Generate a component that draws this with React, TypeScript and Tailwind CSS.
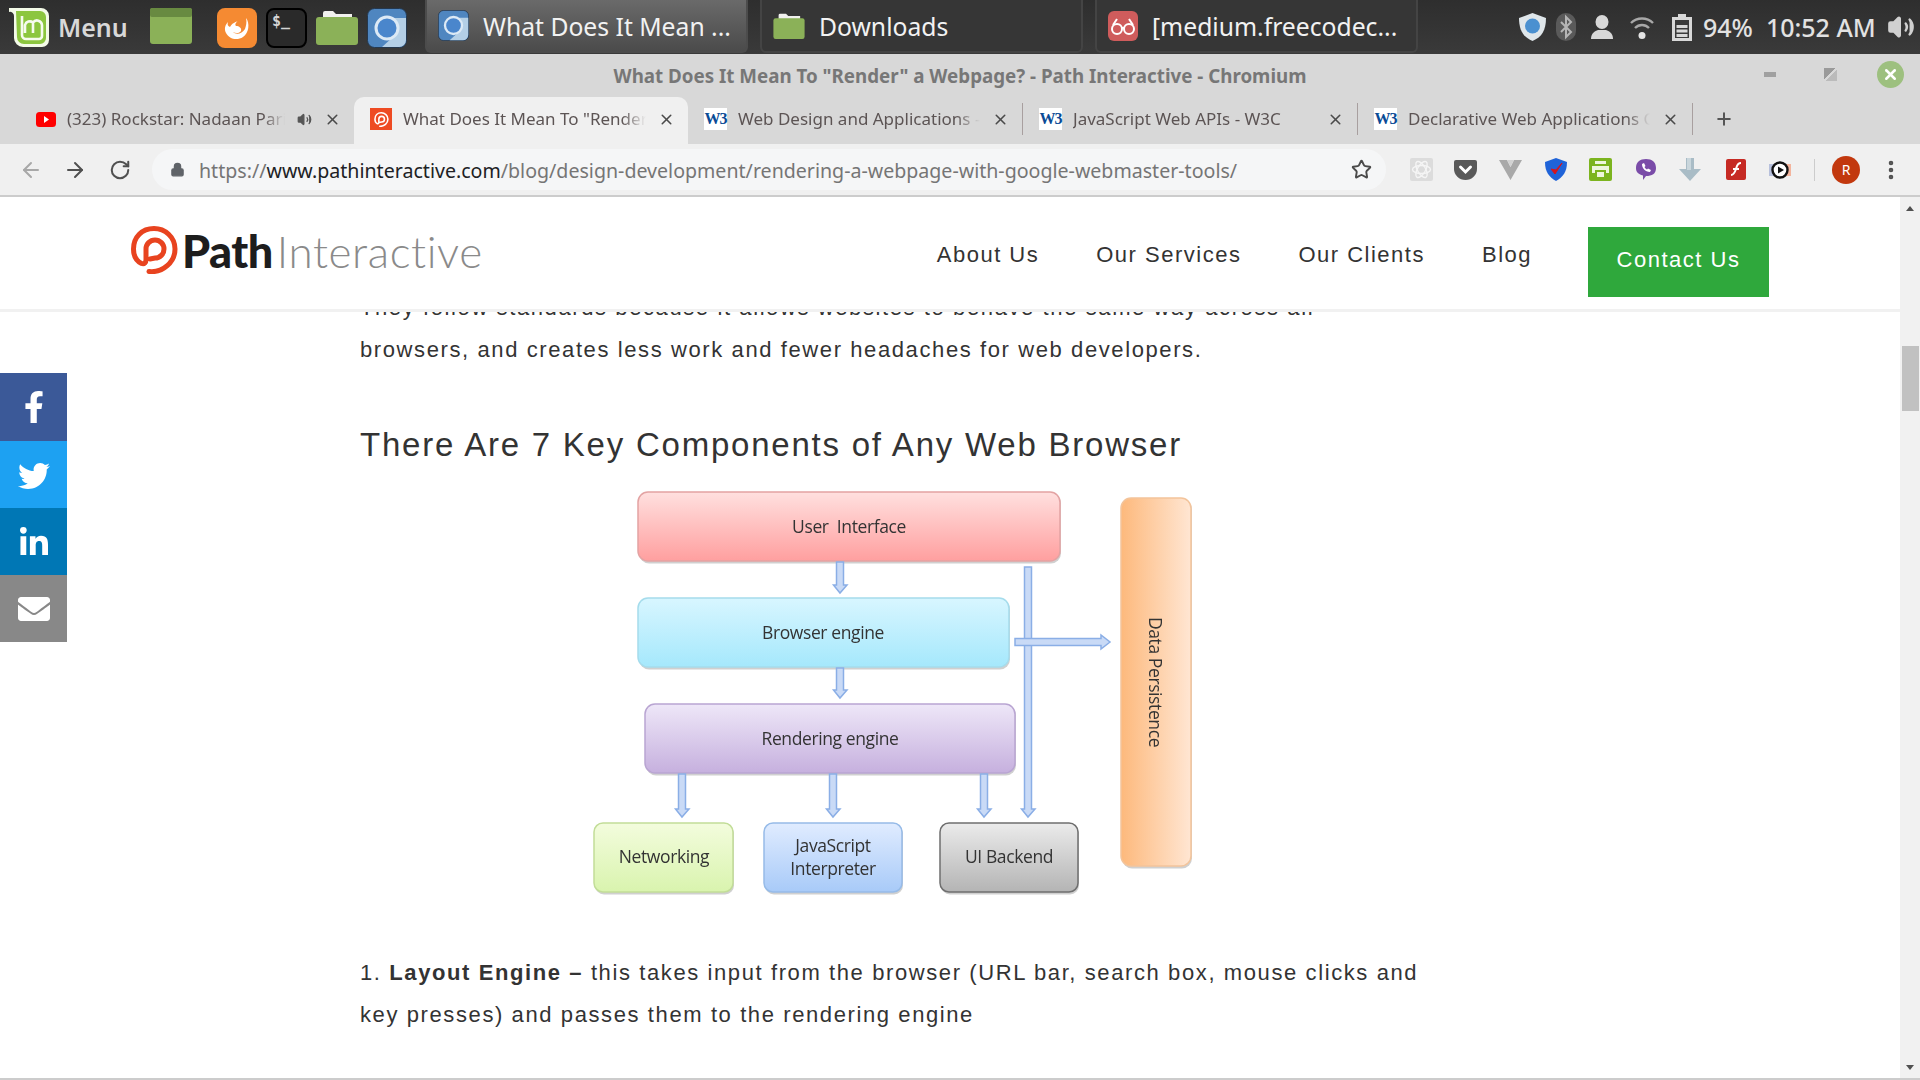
import { ArrowLeft, ArrowRight, EllipsisVertical, Lock, Plus, RotateCw, Star, Volume2, X } from 'lucide-react';
import type { ReactNode } from 'react';
import { FaEnvelope, FaFacebookF, FaLinkedinIn, FaTwitter } from 'react-icons/fa';

function PathMark({ color, className }: { color: string; className: string }) {
  return (
    <svg viewBox="0 0 47 48" className={className} fill="none" stroke={color} strokeWidth="5" strokeLinecap="round">
      <path d="M18 45.5C32 47 44 36 44 23 44 11 34 2.5 23 2.5 11 2.5 2.5 11 2.5 23c0 7 3 12 8 14.5 3 1 4.5-1 4.5-4V23c0-5 4-9 9-9s9 4 9 9-4 9-9 9l-5 1" />
    </svg>
  );
}

function ChromiumIcon({ className }: { className: string }) {
  return (
    <svg viewBox="0 0 40 40" className={className}>
      <rect x="0.5" y="0.5" width="39" height="39" rx="7" fill="#4f86c0" stroke="#24384f" />
      <path d="M20 10h19v22a7 7 0 0 1-7 7H15l11-10z" fill="#b4cfe6" />
      <circle cx="20" cy="20" r="11" fill="#4a86cc" stroke="#dce9f5" strokeWidth="3" />
    </svg>
  );
}

function FolderIcon({ className }: { className: string }) {
  return (
    <svg viewBox="0 0 42 35" className={className}>
      <path d="M7 7V3a2 2 0 0 1 2-2h8l3 3h16v4H7z" fill="#f1f1ee" />
      <rect x="0" y="7" width="42" height="28" rx="3" fill="#8bb158" />
    </svg>
  );
}

function TaskButton({ icon, title, active, width }: { icon: ReactNode; title: string; active?: boolean; width: string }) {
  return (
    <div
      className={`flex h-[53px] items-center rounded-b-[6px] border-x-2 border-b-2 ${width} ${
        active
          ? 'border-[#4c4c4c] bg-gradient-to-b from-[#6a6a6a] to-[#4b4b4b] pl-[11px]'
          : 'border-[#444444] bg-[#363636] pl-[11px]'
      }`}
    >
      {icon}
      <span className="ml-[14px] whitespace-nowrap pt-[3px] text-[24.7px] leading-none text-[#f2f2f2]">{title}</span>
    </div>
  );
}

function TopPanel() {
  return (
    <div className="flex h-[54px] shrink-0 items-start bg-gradient-to-b from-[#2e2e2e] to-[#3a3a3a] [font-family:'Noto_Sans',sans-serif]">
      <svg viewBox="0 0 42 41" className="ml-[8px] mt-[7px] h-[41px] w-[42px] shrink-0">
        <path d="M1 1h32a8 8 0 0 1 8 8v24a7 7 0 0 1-7 7H15A9 9 0 0 1 6 31V9a4 4 0 0 0-5-4z" fill="#f4fbe8" />
        <path d="M8 4h24a6 6 0 0 1 6 6v21a6 6 0 0 1-6 6H16a7 7 0 0 1-7-7z" fill="#8cc63f" />
        <path d="M14 9v19a4 4 0 0 0 4 4h13a3 3 0 0 0 3-3V18a5 5 0 0 0-9-2.5A5 5 0 0 0 17 18v8M25 16v10" fill="none" stroke="#f6fbef" strokeWidth="2.6" />
      </svg>
      <span className="ml-[8px] mt-[9px] w-[69px] text-[25px] font-semibold leading-[36px] text-[#d8d8d8]">Menu</span>
      <svg viewBox="0 0 42 36" className="ml-[23px] mt-[8px] h-[36px] w-[42px] shrink-0">
        <rect width="42" height="36" rx="3" fill="#8bb158" />
        <rect width="42" height="9" rx="2" fill="#688a41" />
      </svg>
      <svg viewBox="0 0 40 40" className="ml-[25px] mt-[8px] h-[40px] w-[40px] shrink-0">
        <rect width="40" height="40" rx="8" fill="#f58a32" />
        <path d="M29 10c4 5 3 15-3 19-6 4-14 2-17-4-2-4-1-8 2-11-1 3 0 4 2 5 2-4 6-5 8-6-3 2-3 4-2 5 3 0 6 2 5 5-1 2-5 3-8 1 3 3 9 2 12-3 1-3 2-7 1-11z" fill="#fff" />
      </svg>
      <div className="ml-[9px] mt-[8px] h-[40px] w-[41px] shrink-0 rounded-[8px] border-2 border-black bg-[#2a2a2a] pl-[4px] text-[15px] font-bold leading-[22px] text-[#d5d5d5] [font-family:'DejaVu_Sans_Mono',monospace]">
        $_
      </div>
      <FolderIcon className="ml-[9px] mt-[10px] h-[35px] w-[42px] shrink-0" />
      <ChromiumIcon className="ml-[9px] mt-[8px] h-[40px] w-[40px] shrink-0" />
      <div className="ml-[18px] flex gap-[12px]">
        <TaskButton active width="w-[323px]" title="What Does It Mean ..." icon={<ChromiumIcon className="h-[31px] w-[31px] shrink-0" />} />
        <TaskButton width="w-[323px]" title="Downloads" icon={<FolderIcon className="h-[26px] w-[32px] shrink-0" />} />
        <TaskButton
          width="w-[323px]"
          title="[medium.freecodec..."
          icon={
            <svg viewBox="0 0 30 30" className="h-[30px] w-[30px] shrink-0">
              <rect width="30" height="30" rx="6" fill="#cf5c5c" />
              <g fill="none" stroke="#fff" strokeWidth="2">
                <circle cx="9" cy="18" r="5" />
                <circle cx="21" cy="18" r="5" />
                <path d="M14 17h2M5 14l4-6M25 14l-4-6" />
              </g>
            </svg>
          }
        />
      </div>
      <svg viewBox="0 0 27 28" className="ml-[101px] mt-[13px] h-[28px] w-[27px] shrink-0">
        <path d="M13.5 0 27 5c0 12-4 19-13.500 23C4 24 0 17 0 5z" fill="#dfe6ea" />
        <circle cx="13.500" cy="13" r="7.500" fill="#4a90d0" />
      </svg>
      <svg viewBox="0 0 20 28" className="ml-[10px] mt-[13px] h-[28px] w-[20px] shrink-0">
        <rect width="20" height="28" rx="10" fill="#5a5a5a" />
        <path d="m5 9 10 10-5 5V4l5 5L5 19" fill="none" stroke="#b5b5b5" strokeWidth="2" />
      </svg>
      <svg viewBox="0 0 22 24" className="ml-[15px] mt-[15px] h-[24px] w-[22px] shrink-0">
        <ellipse cx="11" cy="7" rx="6.500" ry="7" fill="#d8d8d8" />
        <path d="M0 24c0-6 4-8 7-9h8c3 1 7 3 7 9z" fill="#d8d8d8" />
      </svg>
      <svg viewBox="0 0 24 22" className="ml-[17px] mt-[17px] h-[22px] w-[24px] shrink-0" fill="none" stroke="#a8a8a8" strokeWidth="2.400">
        <path d="M1 6c6-6 16-6 22 0M5 11c4-4 10-4 14 0" />
        <circle cx="12" cy="18.500" r="3.500" fill="#e4e4e4" stroke="none" />
      </svg>
      <svg viewBox="0 0 20 27" className="ml-[18px] mt-[14px] h-[27px] w-[20px] shrink-0">
        <path d="M6 0h8v3h6v24H0V3h6z" fill="#d8d8d8" />
        <rect x="3" y="6" width="14" height="18" fill="#3a3a3a" />
        <path d="M4.500 11h11v3h-11zm0 4.500h11v3h-11zm0 4.500h11v3h-11z" fill="#d8d8d8" />
      </svg>
      <span className="ml-[11px] mt-[9px] text-[25px] font-medium leading-[36px] text-[#e2e2e2]">94%</span>
      <span className="ml-[13px] mt-[9px] whitespace-nowrap text-[25px] font-medium leading-[36px] text-[#e2e2e2]">10:52 AM</span>
      <Volume2 className="ml-[11px] mt-[13px] h-[28px] w-[28px] shrink-0 text-[#d0d0d0]" fill="#d0d0d0" />
    </div>
  );
}

function W3Icon() {
  return (
    <span className="flex h-[22px] w-[23px] shrink-0 items-center justify-center bg-white text-[16px] font-bold tracking-[-1px] text-[#0a4b96] [font-family:'Liberation_Serif',serif]">
      W3
    </span>
  );
}

function Tab({ icon, title, active, extra, sep, width = 'w-[334px]' }: { icon: ReactNode; title: string; active?: boolean; extra?: ReactNode; sep?: boolean; width?: string }) {
  return (
    <div className={`flex h-[47px] shrink-0 items-center pb-[3px] pl-[16px] ${width} ${active ? 'rounded-t-[10px] bg-[#f0f0f0]' : ''}`}>
      {icon}
      <span className="ml-[11px] min-w-0 flex-1 overflow-hidden whitespace-nowrap text-[17px] text-[#5c5454] [mask-image:linear-gradient(to_right,black_90%,transparent)]">
        {title}
      </span>
      {extra}
      <X className="ml-[12px] mr-[13px] h-[17px] w-[17px] shrink-0 text-[#4a4a4a]" strokeWidth={2.2} />
      {sep && <span className="h-[32px] w-px shrink-0 bg-[#a89f9f]" />}
    </div>
  );
}

function TitleAndTabs() {
  return (
    <div className="flex h-[90px] shrink-0 flex-col bg-[#d8d8d8] [font-family:'Noto_Sans',sans-serif]">
      <div className="relative flex h-[43px] items-center justify-center pt-[1px]">
        <span className="text-[18.75px] font-bold text-[#777777]">What Does It Mean To "Render" a Webpage? - Path Interactive - Chromium</span>
        <div className="absolute right-[16px] top-[7px] flex items-center">
          <span className="h-[5px] w-[12px] bg-[#a0a0a0]" />
          <span className="ml-[48px] h-[13px] w-[13px] bg-[linear-gradient(135deg,#9a9a9a_45%,transparent_45%,transparent_55%,#bbbbbb_55%)]" />
          <span className="ml-[40px] flex h-[27px] w-[27px] items-center justify-center rounded-full bg-[#9dc07f]">
            <X className="h-[17px] w-[17px] text-white" strokeWidth={3.5} />
          </span>
        </div>
      </div>
      <div className="flex h-[47px] items-end pl-[20px]">
        <Tab
          title="(323) Rockstar: Nadaan Parindey"
          icon={
            <svg viewBox="0 0 20 15" className="h-[15px] w-[20px] shrink-0">
              <rect width="20" height="15" rx="3.500" fill="#ff0000" />
              <path d="m8 4 5 3.500L8 11z" fill="#fff" />
            </svg>
          }
          extra={<Volume2 className="ml-[12px] h-[15px] w-[15px] shrink-0 text-[#555555]" fill="#555555" />}
        />
        <Tab
          active
          title={'What Does It Mean To "Render" a Webpage'}
          icon={
            <span className="flex h-[22px] w-[22px] shrink-0 items-center justify-center bg-[#ee4b23]">
              <PathMark color="#ffffff" className="h-[15px] w-[15px]" />
            </span>
          }
        />
        <Tab sep width="w-[335px]" title="Web Design and Applications - W3C" icon={<W3Icon />} />
        <Tab sep width="w-[335px]" title="JavaScript Web APIs - W3C" icon={<W3Icon />} />
        <Tab sep width="w-[335px]" title="Declarative Web Applications Community" icon={<W3Icon />} />
        <Plus className="mb-[15px] ml-[21px] h-[20px] w-[20px] text-[#555555]" strokeWidth={2.4} />
      </div>
    </div>
  );
}

function Toolbar() {
  return (
    <div className="flex h-[53px] shrink-0 items-center border-b-2 border-[#cccccc] bg-[#f0f0f0] [font-family:'Noto_Sans',sans-serif]">
      <ArrowLeft className="ml-[19px] h-[24px] w-[24px] text-[#a8a8a8]" />
      <ArrowRight className="ml-[20px] h-[24px] w-[24px] text-[#505050]" />
      <RotateCw className="ml-[22px] h-[22px] w-[22px] text-[#505050]" strokeWidth={2.2} />
      <div className="ml-[21px] flex h-[41px] w-[1234px] items-center rounded-full bg-[#f5f6f7] pl-[18px]">
        <Lock className="h-[15px] w-[15px] text-[#5f6368]" fill="#5f6368" />
        <span className="ml-[14px] whitespace-nowrap pt-[2px] text-[19.6px] leading-none text-[#757575]">
          https://<span className="text-[#202124]">www.pathinteractive.com</span>/blog/design-development/rendering-a-webpage-with-google-webmaster-tools/
        </span>
        <Star className="ml-auto mr-[14px] h-[21px] w-[21px] text-[#4a4a4a]" strokeWidth={2.2} />
      </div>
      <svg viewBox="0 0 23 23" className="ml-[24px] h-[23px] w-[23px] shrink-0">
        <rect width="23" height="23" rx="2" fill="#dcdcdc" />
        <g fill="none" stroke="#f5f5f5" strokeWidth="1.400">
          <ellipse cx="11.500" cy="11.500" rx="9" ry="4" />
          <ellipse cx="11.500" cy="11.500" rx="9" ry="4" transform="rotate(60 11.500 11.500)" />
          <ellipse cx="11.500" cy="11.500" rx="9" ry="4" transform="rotate(120 11.500 11.500)" />
        </g>
      </svg>
      <svg viewBox="0 0 23 20" className="ml-[21px] h-[20px] w-[23px] shrink-0">
        <path d="M2 0h19a2 2 0 0 1 2 2v7a11.500 11 0 0 1-23 0V2a2 2 0 0 1 2-2z" fill="#595959" />
        <path d="m6.500 7 5 5 5-5" fill="none" stroke="#fff" strokeWidth="3" strokeLinecap="round" />
      </svg>
      <svg viewBox="0 0 23 20" className="ml-[22px] h-[20px] w-[23px] shrink-0">
        <path d="M0 0h8l3.500 7L15 0h8L11.500 20z" fill="#a9a9a9" />
        <path d="M8 0h7l-3.500 7z" fill="#d2d2d2" />
      </svg>
      <svg viewBox="0 0 22 23" className="ml-[23px] h-[23px] w-[22px] shrink-0">
        <path d="M11 0 22 4c0 10-4 15-11 19C4 19 0 14 0 4z" fill="#1f63d8" />
        <path d="m6 11 4 5 7-11-6 7z" fill="#d6141c" stroke="#d6141c" />
      </svg>
      <svg viewBox="0 0 23 23" className="ml-[22px] h-[23px] w-[23px] shrink-0">
        <rect width="23" height="23" rx="2" fill="#7cb41f" />
        <path d="M6 3h11v3H6zM3 8h17v7h-3v-3H6v3H3zM8 14h7v5H8z" fill="#eef6dd" />
      </svg>
      <svg viewBox="0 0 20 21" className="ml-[24px] h-[21px] w-[20px] shrink-0">
        <path d="M10 0c6 0 10 3 10 9s-4 8-10 8l-3 4v-4.500C2 15 0 13 0 9c0-6 4-9 10-9z" fill="#7a4ca8" />
        <path d="M6 5c0 4 3 8 8 8l1-2-3-1.500-1 1c-1-.5-2-1.500-2.500-2.500l1-1L8 4z" fill="#fff" />
      </svg>
      <svg viewBox="0 0 22 23" className="ml-[23px] h-[23px] w-[22px] shrink-0">
        <path d="M7 0h8v11h7L11 23 0 11h7z" fill="#a9bcc6" />
        <path d="M8 0h4v12H8z" fill="#c9d6dc" />
      </svg>
      <svg viewBox="0 0 20 21" className="ml-[25px] h-[21px] w-[20px] shrink-0">
        <rect width="20" height="21" rx="2" fill="#c62a24" />
        <path d="M15 4c-4 0-4 3-5 6s-2 6-5 6M7 10h6" fill="none" stroke="#fff" strokeWidth="2" />
      </svg>
      <svg viewBox="0 0 22 18" className="ml-[23px] h-[18px] w-[22px] shrink-0">
        <rect x="13" y="3" width="9" height="12" fill="#f3b49d" />
        <rect y="3" width="6" height="12" fill="#b7c0dc" />
        <circle cx="11" cy="9" r="7.500" fill="#fff" stroke="#111" strokeWidth="2.400" />
        <path d="m9 5.500 6 3.500-6 3.500z" fill="#111" />
      </svg>
      <span className="ml-[23px] h-[22px] w-px bg-[#cccccc]" />
      <span className="ml-[17px] flex h-[28px] w-[28px] shrink-0 items-center justify-center rounded-full bg-[#c2380e] text-[14px] text-white">R</span>
      <EllipsisVertical className="ml-[19px] h-[24px] w-[24px] text-[#505050]" strokeWidth={2.6} />
    </div>
  );
}

function SiteHeader() {
  return (
    <header className="flex h-[115px] shrink-0 items-start border-b-[3px] border-[#f1f1f1] bg-white [font-family:'Liberation_Sans',sans-serif]">
      <PathMark color="#e8431f" className="ml-[131px] mt-[29px] h-[48px] w-[47px] shrink-0" />
      <span className="ml-[4px] mt-[28px] text-[45px] font-black leading-[52px] tracking-[-0.5px] text-[#1d1d1d] [font-family:'Lato',sans-serif]">Path</span>
      <span className="ml-[4px] mt-[28px] text-[44px] font-light leading-[52px] tracking-[0.6px] text-[#8a8a8a] [font-family:'Lato',sans-serif]">Interactive</span>
      <nav className="ml-auto mt-[44px] flex gap-[57px] text-[22px] leading-[28px] tracking-[1.5px] text-[#333333]">
        <a>About Us</a>
        <a>Our Services</a>
        <a>Our Clients</a>
        <a>Blog</a>
      </nav>
      <a className="ml-[56px] mr-[131px] mt-[30px] flex h-[70px] w-[181px] items-start justify-center bg-[#2fa83c] pt-[19px] text-[22px] leading-[28px] tracking-[1.5px] text-white">
        Contact Us
      </a>
    </header>
  );
}

function Box({ x, y, w, h, rx, fill, stroke }: { x: number; y: number; w: number; h: number; rx: number; fill: string; stroke: string }) {
  return (
    <g>
      <rect x={x + 1} y={y + 1.5} width={w} height={h} rx={rx} fill="#d0d0d0" />
      <rect x={x} y={y} width={w} height={h - 1} rx={rx} fill={fill} stroke={stroke} strokeWidth="1.500" />
    </g>
  );
}

function ArrowDown({ x, y1, y2 }: { x: number; y1: number; y2: number }) {
  return (
    <path
      d={`M${x - 3.5} ${y1}h7V${y2 - 8}h3.500L${x} ${y2}l-6.500-8H${x - 3.5}z`}
      fill="#c9daf6"
      stroke="#8aaee6"
      strokeWidth="1.500"
    />
  );
}

function BrowserDiagram() {
  const label = "fill-[#333333] whitespace-pre text-[17.5px] font-medium tracking-[-0.4px] [font-family:'Open_Sans',sans-serif]";
  return (
    <svg viewBox="590 488 610 410" className="ml-[230px] mt-[21px] h-[410px] w-[610px] blur-[0.5px]">
      <defs>
        <linearGradient id="red" x2="0" y2="1">
          <stop offset="0" stopColor="#ffe0df" />
          <stop offset="1" stopColor="#ff9f9f" />
        </linearGradient>
        <linearGradient id="cyan" x2="0" y2="1">
          <stop offset="0" stopColor="#d8f6ff" />
          <stop offset="1" stopColor="#a5e8fc" />
        </linearGradient>
        <linearGradient id="purple" x2="0" y2="1">
          <stop offset="0" stopColor="#eee7f8" />
          <stop offset="1" stopColor="#c6b0de" />
        </linearGradient>
        <linearGradient id="lime" x2="0" y2="1">
          <stop offset="0" stopColor="#f3fcdd" />
          <stop offset="1" stopColor="#d9f4ae" />
        </linearGradient>
        <linearGradient id="sky" x2="0" y2="1">
          <stop offset="0" stopColor="#e0ecff" />
          <stop offset="1" stopColor="#a8caf8" />
        </linearGradient>
        <linearGradient id="gray" x2="0" y2="1">
          <stop offset="0" stopColor="#ebebeb" />
          <stop offset="1" stopColor="#b4b4b4" />
        </linearGradient>
        <linearGradient id="orange">
          <stop offset="0" stopColor="#fdb97c" />
          <stop offset="1" stopColor="#ffe6d3" />
        </linearGradient>
      </defs>
      <Box x={638} y={492} w={422} h={70} rx={10} fill="url(#red)" stroke="#e3a3a3" />
      <Box x={638} y={598} w={371} h={70} rx={10} fill="url(#cyan)" stroke="#a5dcec" />
      <Box x={645} y={704} w={370} h={70} rx={10} fill="url(#purple)" stroke="#b9a5d2" />
      <Box x={594} y={823} w={139} h={70} rx={9} fill="url(#lime)" stroke="#c2dd98" />
      <Box x={764} y={823} w={138} h={70} rx={9} fill="url(#sky)" stroke="#96bbe8" />
      <Box x={940} y={823} w={138} h={70} rx={9} fill="url(#gray)" stroke="#6f6f6f" />
      <Box x={1121} y={498} w={70} h={369} rx={10} fill="url(#orange)" stroke="#f3c49b" />
      <ArrowDown x={840} y1={562} y2={593} />
      <ArrowDown x={840} y1={668} y2={698} />
      <ArrowDown x={682} y1={774} y2={817} />
      <ArrowDown x={833} y1={774} y2={817} />
      <ArrowDown x={984} y1={774} y2={817} />
      <ArrowDown x={1028} y1={567} y2={817} />
      <path d="M1015 638.500H1101V635l9 7-9 7v-3.500H1015z" fill="#c9daf6" stroke="#8aaee6" strokeWidth="1.500" />
      <text x={849} y={533} textAnchor="middle" className={label}>User  Interface</text>
      <text x={823} y={639} textAnchor="middle" className={label}>Browser engine</text>
      <text x={830} y={745} textAnchor="middle" className={label}>Rendering engine</text>
      <text x={664} y={863} textAnchor="middle" className={label}>Networking</text>
      <text x={833} y={852} textAnchor="middle" className={label}>JavaScript</text>
      <text x={833} y={875} textAnchor="middle" className={label}>Interpreter</text>
      <text x={1009} y={863} textAnchor="middle" className={label}>UI Backend</text>
      <text x={1149} y={682} textAnchor="middle" transform="rotate(90 1149 682)" className={label}>Data Persistence</text>
    </svg>
  );
}

function Social() {
  return (
    <div className="absolute left-0 top-[176px] flex w-[67px] flex-col text-white">
      <a className="flex h-[68px] items-center justify-center bg-[#3b5998]"><FaFacebookF className="h-[32px] w-[32px]" /></a>
      <a className="flex h-[67px] items-center justify-center bg-[#1da1f2] pt-[2px]"><FaTwitter className="h-[32px] w-[32px]" /></a>
      <a className="flex h-[67px] items-center justify-center bg-[#0077b5] pt-[3px]"><FaLinkedinIn className="h-[32px] w-[32px]" /></a>
      <a className="flex h-[67px] items-center justify-center bg-[#888888]"><FaEnvelope className="h-[32px] w-[32px]" /></a>
    </div>
  );
}

function Scrollbar() {
  return (
    <div className="relative w-[20px] shrink-0 bg-[#f1f1f1]">
      <span className="absolute left-[6px] top-[9px] h-0 w-0 border-x-[4.5px] border-b-[5px] border-x-transparent border-b-[#505050]" />
      <span className="absolute left-[2px] top-[149px] h-[65px] w-[17px] bg-[#c1c1c1]" />
      <span className="absolute bottom-[8px] left-[6px] h-0 w-0 border-x-[4.5px] border-t-[5px] border-x-transparent border-t-[#505050]" />
    </div>
  );
}

export default function App() {
  return (
    <div className="flex h-[1080px] w-[1920px] flex-col overflow-hidden bg-white">
      <TopPanel />
      <TitleAndTabs />
      <Toolbar />
      <div className="relative flex min-h-0 flex-1 border-b-2 border-[#cccccc]">
        <div className="flex min-w-0 flex-1 flex-col">
          <SiteHeader />
          <main className="min-h-0 flex-1 overflow-hidden pl-[360px] text-[#333333] [font-family:'Liberation_Sans',sans-serif]">
            <p className="-mt-[25px] w-[1060px] text-[22px] leading-[42px] tracking-[1.6px]">
              They follow standards because it allows websites to behave the same way across all browsers, and creates less work and fewer headaches for web developers.
            </p>
            <h2 className="mt-[52px] text-[33px] leading-[44px] tracking-[1.77px]">There Are 7 Key Components of Any Web Browser</h2>
            <BrowserDiagram />
            <p className="mt-[54px] w-[1060px] text-[22px] leading-[42px] tracking-[1.6px]">
              1. <strong>Layout Engine –</strong> this takes input from the browser (URL bar, search box, mouse clicks and key presses) and passes them to the rendering engine
            </p>
          </main>
        </div>
        <Scrollbar />
        <Social />
      </div>
    </div>
  );
}
